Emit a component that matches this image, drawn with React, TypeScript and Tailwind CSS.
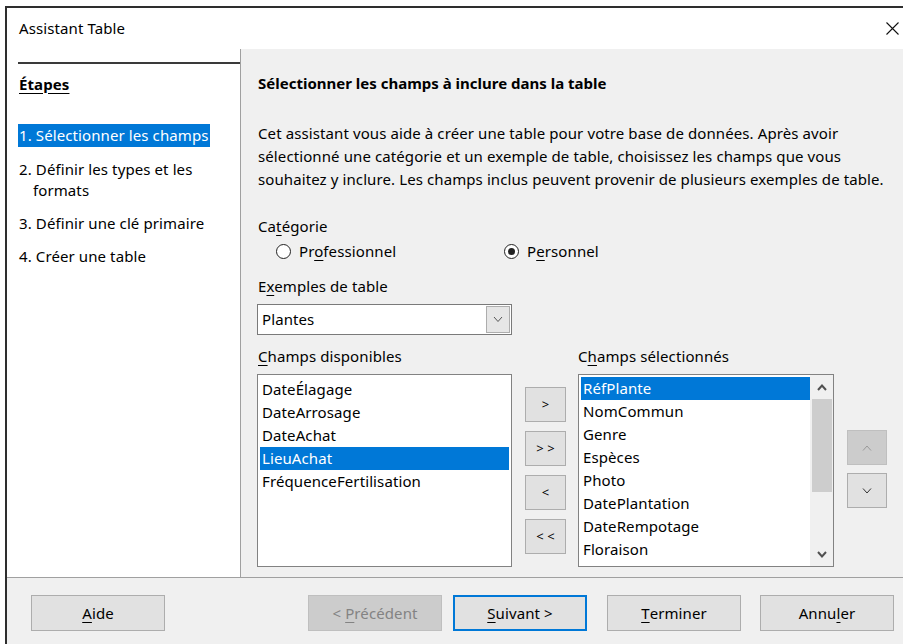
import React from 'react';
import clsx from 'clsx';

// Souligne la lettre mnémonique d'un libellé
const Mn = ({ children }: { children: React.ReactNode }) => (
  <span className="underline decoration-1 underline-offset-[3px]">{children}</span>
);

interface WizButtonProps {
  children: React.ReactNode;
  disabled?: boolean;
  focused?: boolean;
  className?: string;
}

const WizButton = ({ children, disabled, focused, className }: WizButtonProps) => (
  <div
    className={clsx(
      'flex h-[36px] w-[134px] items-center justify-center whitespace-pre',
      disabled
        ? 'border border-[#bfbfbf] bg-[#cccccc] text-[#838383]'
        : focused
          ? 'border-2 border-[#0078d7] bg-[#e1e1e1] text-black'
          : 'border border-[#adadad] bg-[#e1e1e1] text-black',
      className
    )}
  >
    {children}
  </div>
);

const SmallButton = ({ children, disabled }: { children: React.ReactNode; disabled?: boolean }) => (
  <div
    className={clsx(
      'flex h-[35px] w-full items-center justify-center whitespace-pre border text-[13px]',
      disabled ? 'border-[#bfbfbf] bg-[#cccccc] text-[#9a9a9a]' : 'border-[#adadad] bg-[#e1e1e1] text-black'
    )}
  >
    {children}
  </div>
);

const Radio = ({ checked }: { checked?: boolean }) => (
  <div className="flex h-[15px] w-[15px] items-center justify-center rounded-full border border-[#222] bg-white">
    {checked && <div className="h-[7px] w-[7px] rounded-full bg-[#222]" />}
  </div>
);

const Chevron = ({ dir, weight = 1, className }: { dir: 'up' | 'down'; weight?: number; className?: string }) => (
  <svg width="10" height="7" viewBox="0 0 10 7" className={className}>
    <polyline
      points={dir === 'up' ? '1,6 5,1.5 9,6' : '1,1 5,5.5 9,1'}
      fill="none"
      stroke="currentColor"
      strokeWidth={weight}
    />
  </svg>
);

const steps = [
  { n: '1.', label: 'Sélectionner les champs', active: true },
  { n: '2.', label: 'Définir les types et les', extra: 'formats' },
  { n: '3.', label: 'Définir une clé primaire' },
  { n: '4.', label: 'Créer une table' },
];

const available = ['DateÉlagage', 'DateArrosage', 'DateAchat', 'LieuAchat', 'FréquenceFertilisation'];
const selected = [
  'RéfPlante',
  'NomCommun',
  'Genre',
  'Espèces',
  'Photo',
  'DatePlantation',
  'DateRempotage',
  'Floraison',
];

export default function App() {
  return (
    <div className="h-[644px] w-[903px] overflow-hidden bg-white pl-[5px] pt-[6px] font-['Noto_Sans',sans-serif] text-[15px] tracking-[0.1px] text-black">
      <div className="flex h-[638px] flex-col border-l-2 border-t-2 border-[#2e2e2e]">
        {/* barre de titre */}
        <div className="flex h-[41px] shrink-0 items-center justify-between pl-[12px] pr-[4px]">
          <span className="leading-[21px]">Assistant Table</span>
          <svg width="13" height="13" viewBox="0 0 13 13">
            <path d="M0.5 0.5 L12.5 12.5 M12.5 0.5 L0.5 12.5" stroke="#111" strokeWidth="1.1" />
          </svg>
        </div>

        <div className="flex min-h-0 flex-1">
          {/* étapes */}
          <div className="w-[234px] shrink-0 border-r border-[#a0a0a0] bg-white pl-[11px] pt-[13px]">
            <div className="h-[2px] bg-[#3a3a3a]" />
            <div className="mt-[10px] pl-[1px] font-bold leading-[21px] underline decoration-1 underline-offset-[3px]">
              Étapes
            </div>
            <div className="mt-[29px] flex flex-col gap-[12px]">
              {steps.map((s) => (
                <div key={s.n} className="leading-[21px]">
                  <div
                    className={clsx(
                      'w-fit px-[1px]',
                      s.active && 'bg-[#0078d7] py-[1px] text-white'
                    )}
                  >
                    {s.n} {s.label}
                  </div>
                  {s.extra && <div className="pl-[15px]">{s.extra}</div>}
                </div>
              ))}
            </div>
          </div>

          {/* contenu de l'étape */}
          <div className="flex-1 bg-[#f0f0f0] pl-[16px] pt-[24px]">
            <div className="pl-[1px] font-bold leading-[21px] tracking-normal">
              Sélectionner les champs à inclure dans la table
            </div>
            <p className="mt-[28px] whitespace-nowrap pl-[1px] leading-[23px]">
              Cet assistant vous aide à créer une table pour votre base de données. Après avoir
              <br />
              sélectionné une catégorie et un exemple de table, choisissez les champs que vous
              <br />
              souhaitez y inclure. Les champs inclus peuvent provenir de plusieurs exemples de table.
            </p>

            <div className="mt-[25px] pl-[1px] leading-[21px]">
              Ca<Mn>t</Mn>égorie
            </div>
            <div className="mt-[4px] flex h-[21px] items-center pl-[19px]">
              <div className="flex w-[228px] items-center gap-[8px]">
                <Radio />
                <span>
                  Pr<Mn>o</Mn>fessionnel
                </span>
              </div>
              <div className="flex items-center gap-[8px]">
                <Radio checked />
                <span>
                  P<Mn>e</Mn>rsonnel
                </span>
              </div>
            </div>

            <div className="mt-[14px] pl-[1px] leading-[21px]">
              E<Mn>x</Mn>emples de table
            </div>
            <div className="mt-[7px] flex h-[31px] w-[255px] items-center justify-between border border-[#7a7a7a] bg-white pl-[4px] pr-[1px]">
              <span>Plantes</span>
              <div className="flex h-[27px] w-[24px] items-center justify-center border border-[#adadad] bg-[#e6e6e6] text-[#555]">
                <Chevron dir="down" />
              </div>
            </div>

            <div className="mt-[11px] flex leading-[21px]">
              <div className="w-[321px] pl-[1px]">
                <Mn>C</Mn>hamps disponibles
              </div>
              <div>
                C<Mn>h</Mn>amps sélectionnés
              </div>
            </div>

            <div className="mt-[7px] flex items-start">
              {/* champs disponibles */}
              <div className="h-[193px] w-[255px] border border-[#828282] bg-white px-[2px] pt-[3px]">
                {available.map((f) => (
                  <div
                    key={f}
                    className={clsx(
                      'flex h-[23px] items-center pl-[2px]',
                      f === 'LieuAchat' && 'bg-[#0078d7] text-white'
                    )}
                  >
                    {f}
                  </div>
                ))}
              </div>

              <div className="ml-[13px] mt-[13px] flex w-[41px] flex-col gap-[9px]">
                <SmallButton>&gt;</SmallButton>
                <SmallButton>{'> >'}</SmallButton>
                <SmallButton>&lt;</SmallButton>
                <SmallButton>{'< <'}</SmallButton>
              </div>

              {/* champs sélectionnés */}
              <div className="ml-[12px] flex h-[193px] w-[256px] border border-[#828282] bg-white">
                <div className="flex-1 pl-[2px] pt-[2px]">
                  {selected.map((f) => (
                    <div
                      key={f}
                      className={clsx(
                        'flex h-[23px] items-center pl-[2px]',
                        f === 'RéfPlante' && 'bg-[#0078d7] text-white'
                      )}
                    >
                      {f}
                    </div>
                  ))}
                </div>
                <div className="flex w-[23px] flex-col items-center bg-[#f0f0f0] text-[#505050]">
                  <div className="flex h-[24px] items-center">
                    <Chevron dir="up" weight={2} />
                  </div>
                  <div className="h-[93px] w-[20px] bg-[#cdcdcd]" />
                  <div className="flex flex-1 items-end pb-[8px]">
                    <Chevron dir="down" weight={2} />
                  </div>
                </div>
              </div>

              <div className="ml-[13px] mt-[56px] flex w-[40px] flex-col gap-[8px]">
                <SmallButton disabled>
                  <Chevron dir="up" className="h-[8px] w-[10px]" />
                </SmallButton>
                <SmallButton>
                  <Chevron dir="down" className="h-[8px] w-[10px] text-[#333]" />
                </SmallButton>
              </div>
            </div>
          </div>
        </div>

        {/* boutons de l'assistant */}
        <div className="flex h-[67px] shrink-0 items-start border-t border-[#a0a0a0] bg-[#f0f0f0] pl-[24px] pt-[17px]">
          <WizButton>
            <Mn>A</Mn>ide
          </WizButton>
          <WizButton disabled className="ml-[143px]">
            {'< '}
            <Mn>P</Mn>récédent
          </WizButton>
          <WizButton focused className="ml-[11px]">
            <Mn>S</Mn>
            {'uivant >'}
          </WizButton>
          <WizButton className="ml-[20px]">
            <Mn>T</Mn>erminer
          </WizButton>
          <WizButton className="ml-[19px]">
            Annu<Mn>l</Mn>er
          </WizButton>
        </div>
      </div>
    </div>
  );
}
